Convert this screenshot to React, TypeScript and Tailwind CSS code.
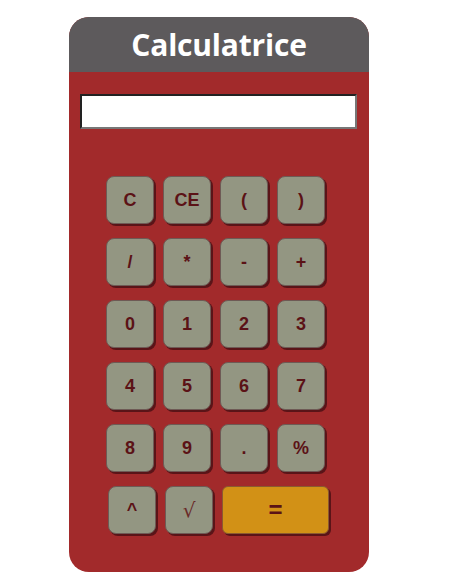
import React, { useState } from "react";

const rows = [
  ["C", "CE", "(", ")"],
  ["/", "*", "-", "+"],
  ["0", "1", "2", "3"],
  ["4", "5", "6", "7"],
  ["8", "9", ".", "%"],
];

const keyCls =
  "w-[48px] h-[48px] rounded-[8px] bg-[#939682] border border-[#6e5a55] shadow-[2px_2px_0_#5a1418] text-[#5b1216] text-[18px] font-bold flex items-center justify-center [font-family:'Liberation_Sans',Arial,sans-serif]";

const App = () => {
  const [value, setValue] = useState("");

  const press = (k: string) => {
    if (k === "C") return setValue("");
    if (k === "CE") return setValue(value.slice(0, -1));
    if (k === "=") return;
    setValue(value + k);
  };

  return (
    <div className="min-h-screen bg-white pt-[17px]">
      <div className="ml-[69px] w-[300px] h-[555px] rounded-[20px] overflow-hidden bg-[#a22a2b] flex flex-col">
        {/* Header */}
        <div className="h-[55px] bg-[#5d5a5c] flex items-center justify-center">
          <h1 className="text-white text-[30px] font-bold [font-family:'Open_Sans',sans-serif] tracking-[-0.2px]">
            Calculatrice
          </h1>
        </div>

        {/* Display */}
        <div className="px-[11px] pt-[22px]">
          <input
            value={value}
            readOnly
            className="w-[277px] h-[35px] bg-white border-2 border-t-[#222] border-l-[#222] border-b-[#777] border-r-[#777] outline-none px-1"
          />
        </div>

        {/* Keys */}
        <div className="ml-[37px] mt-[47px] flex flex-col gap-[14px]">
          {rows.map((row, i) => (
            <div key={i} className="flex gap-[9px]">
              {row.map((k) => (
                <button key={k} onClick={() => press(k)} className={keyCls}>
                  {k}
                </button>
              ))}
            </div>
          ))}
          <div className="flex gap-[9px] ml-[2px]">
            <button onClick={() => press("^")} className={keyCls}>
              ^
            </button>
            <button
              onClick={() => press("√")}
              className="w-[48px] h-[48px] rounded-[8px] bg-[#939682] border border-[#6e5a55] shadow-[2px_2px_0_#5a1418] text-[#6a2a28] text-[20px] font-normal flex items-center justify-center [font-family:'DejaVu_Serif',serif]"
            >
              √
            </button>
            <button
              onClick={() => press("=")}
              className="w-[107px] h-[48px] rounded-[6px] bg-[#d29116] border border-[#8a5a30] shadow-[2px_2px_0_#5a1418] text-[#5b1216] text-[24px] font-bold flex items-center justify-center [font-family:'Liberation_Sans',Arial,sans-serif]"
            >
              =
            </button>
          </div>
        </div>
      </div>
    </div>
  );
};

export default App;
